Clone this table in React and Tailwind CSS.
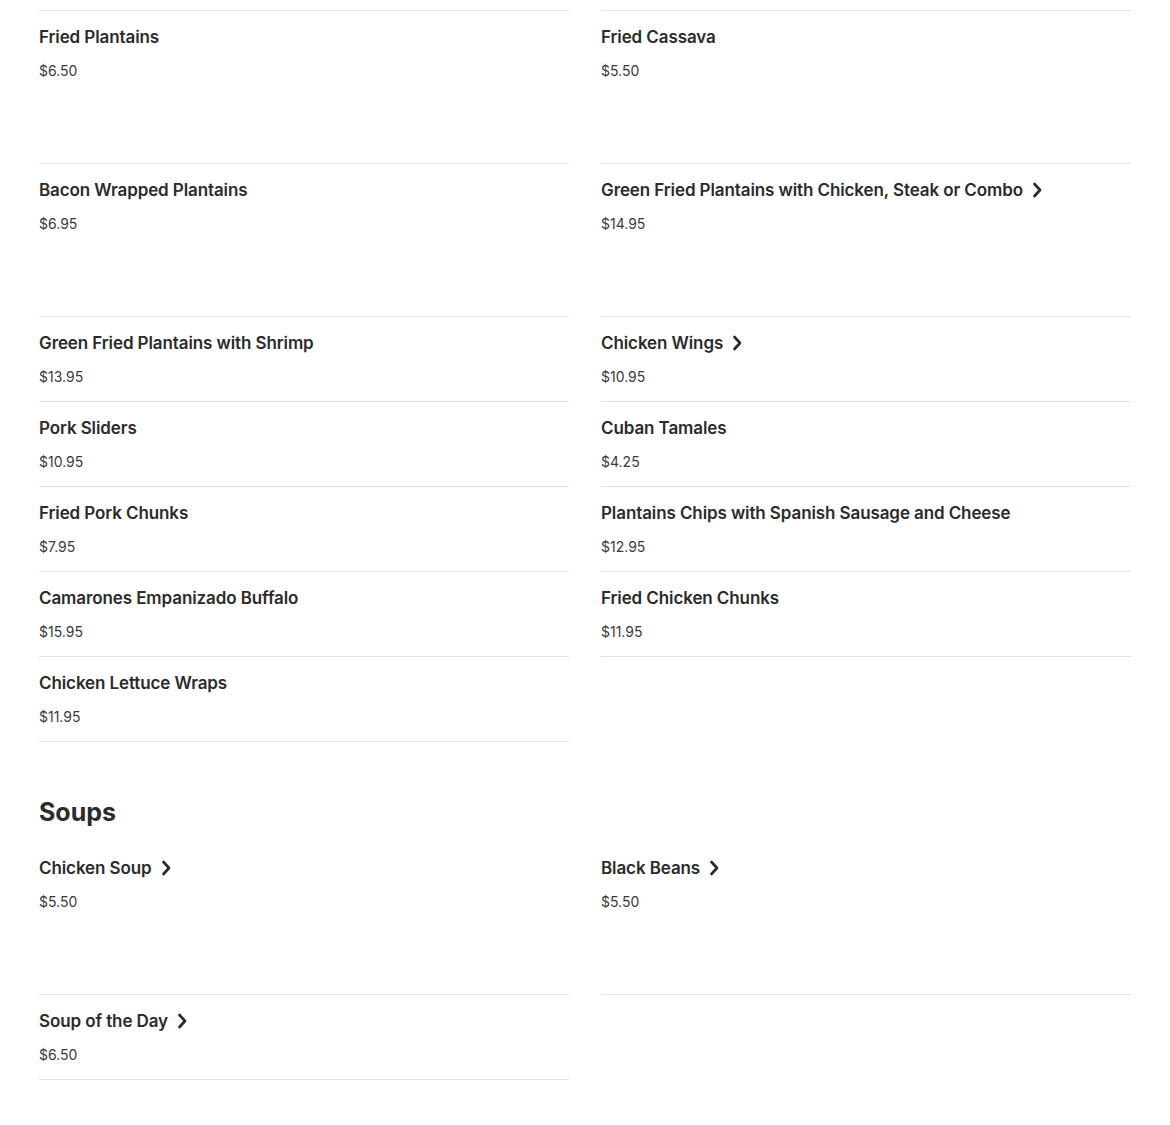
import React from 'react';

const appetizers = [
  { name: 'Fried Plantains', price: '$6.50', tall: true },
  { name: 'Fried Cassava', price: '$5.50', tall: true },
  { name: 'Bacon Wrapped Plantains', price: '$6.95', tall: true },
  { name: 'Green Fried Plantains with Chicken, Steak or Combo', price: '$14.95', tall: true, more: true },
  { name: 'Green Fried Plantains with Shrimp', price: '$13.95' },
  { name: 'Chicken Wings', price: '$10.95', more: true },
  { name: 'Pork Sliders', price: '$10.95' },
  { name: 'Cuban Tamales', price: '$4.25' },
  { name: 'Fried Pork Chunks', price: '$7.95' },
  { name: 'Plantains Chips with Spanish Sausage and Cheese', price: '$12.95' },
  { name: 'Camarones Empanizado Buffalo', price: '$15.95' },
  { name: 'Fried Chicken Chunks', price: '$11.95' },
  { name: 'Chicken Lettuce Wraps', price: '$11.95' },
];

const soups = [
  { name: 'Chicken Soup', price: '$5.50', tall: true, more: true },
  { name: 'Black Beans', price: '$5.50', tall: true, more: true },
  { name: 'Soup of the Day', price: '$6.50', more: true },
];

function Chevron() {
  return (
    <svg width="11" height="16" viewBox="0 0 11 16" fill="none" className="ml-[9px] shrink-0">
      <path d="M2.5 2 L8 8 L2.5 14" stroke="#2b2b2b" strokeWidth="2.7" strokeLinecap="round" strokeLinejoin="round" />
    </svg>
  );
}

function MenuItem({ item }) {
  return (
    <div
      className={`border-b border-[#e2e2e2] pt-[14px] pb-[15px] ${item.tall ? 'h-[153px]' : 'h-[85px]'}`}
    >
      <div className="flex items-center h-6">
        <span className="text-[17px] leading-6 font-semibold text-[#2b2b2b] tracking-[-0.1px]">{item.name}</span>
        {item.more && <Chevron />}
      </div>
      <p className="mt-3 text-[14px] leading-5 text-[#3a3a3a]">{item.price}</p>
    </div>
  );
}

export default function App() {
  return (
    <div className="bg-white min-h-[1125px] px-[39px] font-['Inter',sans-serif]">
      <div className="grid grid-cols-2 gap-x-8">
        <div className="col-span-2 grid grid-cols-2 gap-x-8 h-[11px]">
          <div className="border-b border-[#e2e2e2]" />
          <div className="border-b border-[#e2e2e2]" />
        </div>
        {appetizers.map((item) => (
          <MenuItem key={item.name} item={item} />
        ))}
      </div>

      <h2 className="mt-[52px] text-[25px] leading-9 font-bold text-[#2b2b2b]">Soups</h2>

      <div className="mt-3 grid grid-cols-2 gap-x-8">
        {soups.map((item) => (
          <MenuItem key={item.name} item={item} />
        ))}
      </div>
    </div>
  );
}
